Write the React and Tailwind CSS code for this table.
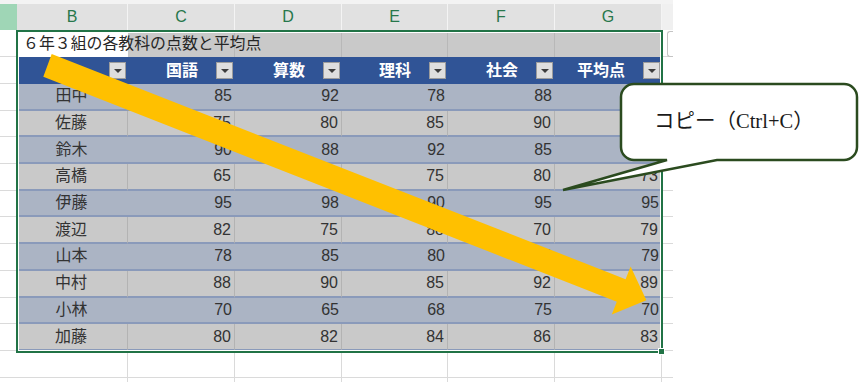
import React from 'react';

// column widths for B..G (px), written out so Tailwind picks them up
const W = ['w-[111px]', 'w-[107px]', 'w-[107px]', 'w-[106px]', 'w-[107px]', 'w-[107px]'];
const LETTERS = ['B', 'C', 'D', 'E', 'F', 'G'];
const HEADS = ['氏名', '国語', '算数', '理科', '社会', '平均点'];

// averages of the first three rows sit under the callout, so they are left blank
const ROWS = [
    ['田中', 85, 92, 78, 88, ''],
    ['佐藤', 75, 80, 85, 90, ''],
    ['鈴木', 90, 88, 92, 85, ''],
    ['高橋', 65, 72, 75, 80, 73],
    ['伊藤', 95, 98, 90, 95, 95],
    ['渡辺', 82, 75, 88, 70, 79],
    ['山本', 78, 85, 80, 73, 79],
    ['中村', 88, 90, 85, 92, 89],
    ['小林', 70, 65, 68, 75, 70],
    ['加藤', 80, 82, 84, 86, 83],
];

const FONT = { fontFamily: '"Liberation Sans", "Noto Sans CJK JP", sans-serif' };

const DropButton = () => (
    <div className="w-[17px] h-[17px] mr-[2px] shrink-0 bg-[#dedede] border border-[#9c9c9c] flex items-center justify-center">
        <div className="w-0 h-0 border-l-[4px] border-r-[4px] border-t-[4px] border-l-transparent border-r-transparent border-t-[#3c3c3c]" />
    </div>
);

const GutterCell = () => <div className="w-[17px] shrink-0 bg-white border-b border-[#dadada]" />;
const TailCell = () => <div className="w-[11px] shrink-0 bg-white border-b border-[#dadada]" />;

export default function App() {
    return (
        <div className="relative w-[861px] h-[382px] overflow-hidden bg-white" style={FONT}>
            {/* Sheet */}
            <div className="w-[673px] flex flex-col">
                <div className="h-[4px] bg-[#f3f3f3]" />

                {/* Column letters */}
                <div className="h-[26px] flex">
                    <div className="w-[17px] shrink-0 bg-[#9fd6b6]" />
                    {LETTERS.map((l, i) => (
                        <div key={l} className={`${W[i]} shrink-0 bg-[#e1e1e1] border-r border-[#f4f4f4] flex items-center justify-center text-[16px] text-[#27774b]`}>
                            {l}
                        </div>
                    ))}
                    <div className="w-[11px] shrink-0 bg-[#f0f0f0]" />
                </div>

                {/* Title row */}
                <div className="h-[27px] flex">
                    <GutterCell />
                    <div className={`${W[0]} shrink-0 bg-white flex items-center pl-[6px]`}>
                        <span className="relative z-10 whitespace-nowrap text-[15.9px] text-[#262626]">６年３組の各教科の点数と平均点</span>
                    </div>
                    {W.slice(1).map((w, i) => (
                        <div key={i} className={`${w} shrink-0 bg-[#c9c9c9] border-r border-[#b8b8b8]`} />
                    ))}
                    <TailCell />
                </div>

                {/* Table header */}
                <div className="h-[27px] flex">
                    <GutterCell />
                    {HEADS.map((h, i) => (
                        <div key={h} className={`${W[i]} shrink-0 bg-[#305496] flex items-center`}>
                            {i === 0 ? (
                                <span className="flex-1 text-center pl-[1px] text-[16px] font-bold text-white">{h}</span>
                            ) : (
                                <span className="flex-1 text-right pr-[18px] text-[16px] font-bold text-white">{h}</span>
                            )}
                            <DropButton />
                        </div>
                    ))}
                    <TailCell />
                </div>

                {/* Data rows */}
                {ROWS.map((r, ri) => {
                    const blue = ri % 2 === 0;
                    return (
                        <div key={r[0]} className="h-[26.7px] flex">
                            <GutterCell />
                            {r.map((v, ci) => (
                                <div
                                    key={ci}
                                    className={`${W[ci]} shrink-0 flex items-center text-[16px] text-[#333333] border-b-2 border-b-[#8a9aba] ${blue ? 'bg-[#abb4c4]' : 'bg-[#c9c9c9] border-r border-r-[#b3b3b3]'} ${ci === 0 ? 'justify-center pr-[2px]' : 'justify-end pr-[3px]'}`}
                                >
                                    {v}
                                </div>
                            ))}
                            <TailCell />
                        </div>
                    );
                })}

                {/* Empty rows below */}
                {[0, 1].map((k) => (
                    <div key={k} className="h-[27px] flex">
                        <GutterCell />
                        {W.map((w, i) => (
                            <div key={i} className={`${w} shrink-0 bg-white border-r border-b border-[#dadada]`} />
                        ))}
                        <TailCell />
                    </div>
                ))}
            </div>

            {/* Selection border */}
            <div className="absolute left-[16px] top-[30px] w-[647px] h-[323px] border-2 border-[#217346] shadow-[inset_0_0_0_1px_#ffffff]" />
            <div className="absolute left-[658px] top-[348px] w-[7px] h-[7px] bg-[#217346] border border-white" />
            {/* quick analysis button edge */}
            <div className="absolute left-[667px] top-[31px] w-[6px] h-[26px] border-l border-y border-[#c4c4c4] rounded-l-[3px] bg-white" />

            {/* Yellow arrow */}
            <svg className="absolute left-0 top-0 pointer-events-none" width="861" height="382" viewBox="0 0 861 382">
                <polygon
                    points="51.7,54 625.6,279.2 630.6,266.5 646.4,300.3 611.8,314.5 616.8,301.8 43.3,76.7"
                    fill="#ffc000"
                />
            </svg>

            {/* Callout */}
            <svg className="absolute left-0 top-0 pointer-events-none" width="861" height="382" viewBox="0 0 861 382">
                <path
                    d="M634,84 H844 A13,13 0 0 1 857,97 V147 A13,13 0 0 1 844,160 H717 L563,190 L667,160 H634 A13,13 0 0 1 621,147 V97 A13,13 0 0 1 634,84 Z"
                    fill="#ffffff"
                    stroke="#2b4b1f"
                    strokeWidth="2.5"
                    strokeLinejoin="miter"
                />
            </svg>
            <div
                className="absolute left-[654px] top-[107px] text-[20.5px] leading-[28px] text-[#1a1a1a] whitespace-nowrap"
                style={{ fontFamily: '"Liberation Serif", "Noto Sans CJK JP", serif' }}
            >
                コピー（Ctrl+C）
            </div>
        </div>
    );
}
